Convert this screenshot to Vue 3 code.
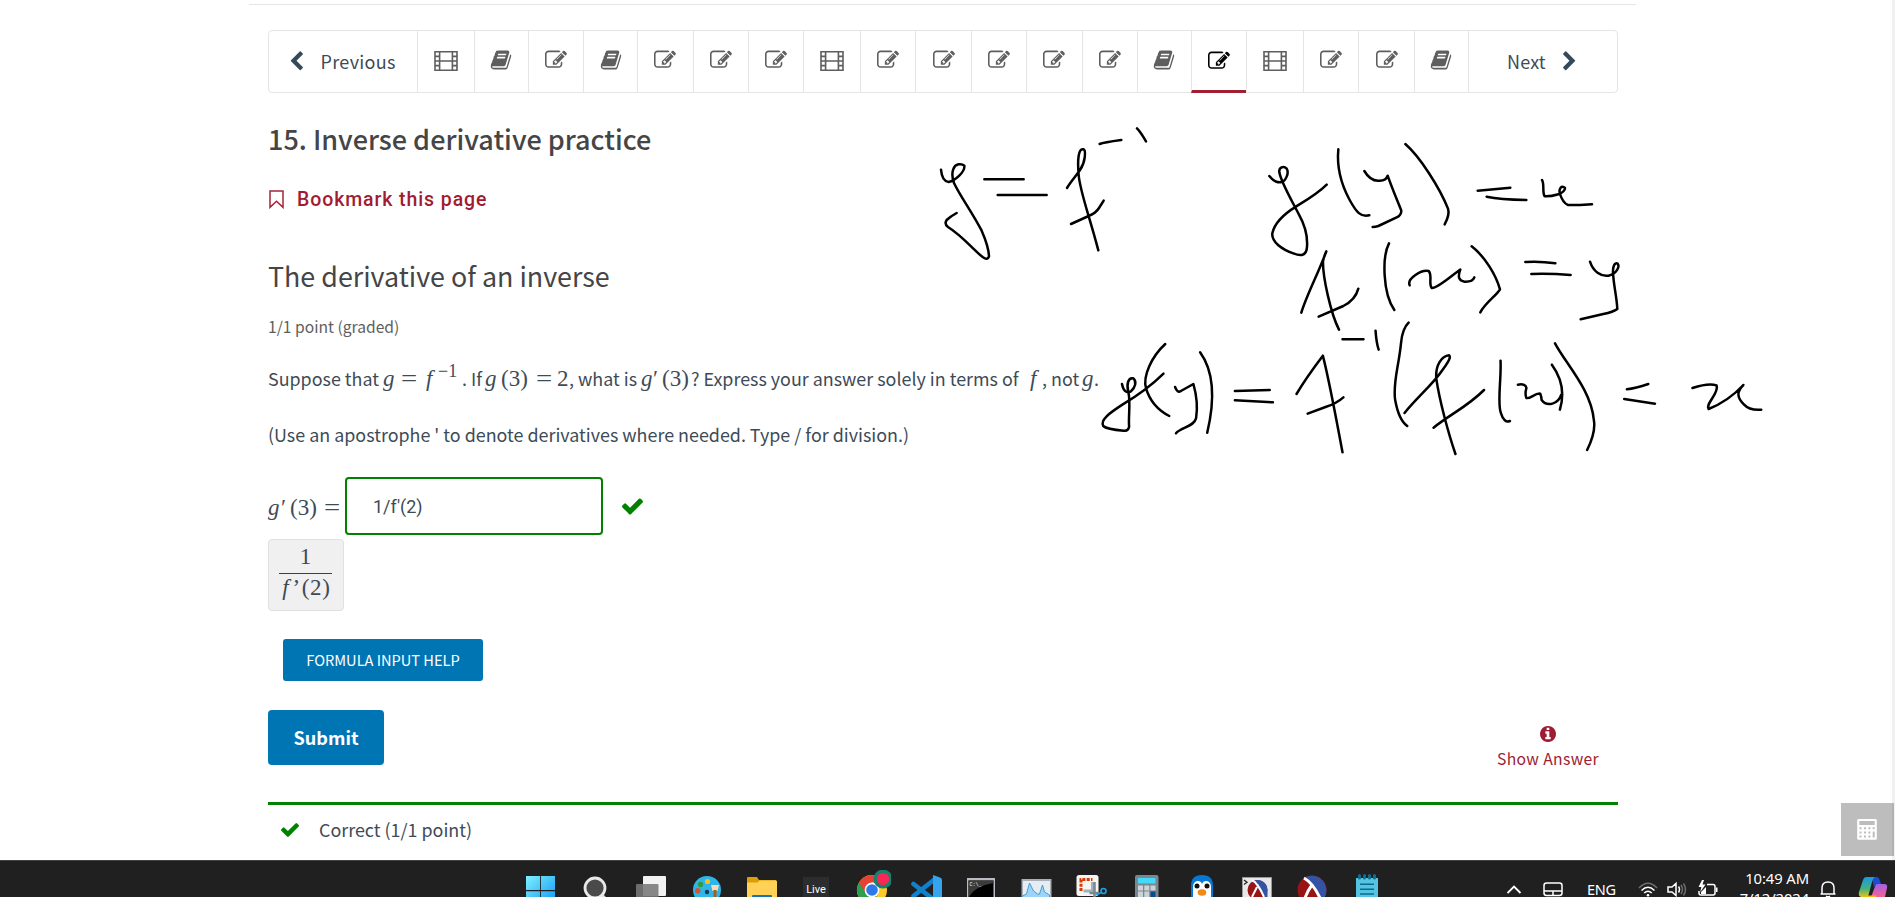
<script setup>
const icons = {
  edit: 'M888 1184l116-116-152-152-116 116v56h96v96h56zm440-720q-16-16-33 1l-350 350q-17 17-1 33t33-1l350-350q17-17 1-33zm80 594v190q0 119-84.5 203.5t-203.5 84.5h-832q-119 0-203.5-84.5t-84.5-203.5v-832q0-119 84.5-203.5t203.5-84.5h832q63 0 117 25 15 7 18 23 3 17-9 29l-49 49q-14 14-32 8-23-6-45-6h-832q-66 0-113 47t-47 113v832q0 66 47 113t113 47h832q66 0 113-47t47-113v-126q0-13 9-22l64-64q15-15 35-7t20 29zm-96-738l288 288-672 672h-288v-288zm444 132l-92 92-288-288 92-92q28-28 68-28t68 28l152 152q28 28 28 68t-28 68z',
  book: 'M1703 478q40 57 18 129l-275 906q-19 64-76.5 107.5t-122.5 43.5h-923q-77 0-148.5-53.5t-99.5-131.5q-24-67-2-127 0-4 3-27t4-37q1-8-3-21.5t-3-19.5q2-11 8-21t16.5-23.5 16.5-23.5q23-38 45-91.5t30-91.5q3-10 .5-30t-.5-28q3-11 17-28t17-23q21-36 42-92t25-90q1-9-2.5-32t.5-28q4-13 22-30.5t22-22.5q19-26 42.5-84.5t27.5-96.5q1-8-3-25.5t-2-26.5q2-8 9-18t18-23 17-21q8-12 16.5-30.5t15-35 16-36 19.5-32 26.5-23.5 36-11.5 47.5 5.5l-1 3q38-9 51-9h761q74 0 114 56t18 130l-274 906q-36 119-71.5 153.5t-128.5 34.5h-869q-27 0-38 15-11 16-1 43 24 70 144 70h923q29 0 56-15.5t35-41.5l300-987q7-22 5-57 38 15 59 43zm-1064 2q-4 13 2 22.5t20 9.5h608q13 0 25.5-9.5t16.5-22.5l21-64q4-13-2-22.5t-20-9.5h-608q-13 0-25.5 9.5t-16.5 22.5zm-83 256q-4 13 2 22.5t20 9.5h608q13 0 25.5-9.5t16.5-22.5l21-64q4-13-2-22.5t-20-9.5h-608q-13 0-25.5 9.5t-16.5 22.5z',
  check: 'M1671 566q0 40-28 68l-724 724-136 136q-28 28-68 28t-68-28l-136-136-362-362q-28-28-28-68t28-68l136-136q28-28 68-28t68 28l294 295 656-657q28-28 68-28t68 28l136 136q28 28 28 68z',
  left: 'M1427 301l-531 531 531 531q19 19 19 45t-19 45l-166 166q-19 19-45 19t-45-19l-742-742q-19-19-19-45t19-45l742-742q19-19 45-19t45 19l166 166q19 19 19 45t-19 45z',
  right: 'M1363 877l-742 742q-19 19-45 19t-45-19l-166-166q-19-19-19-45t19-45l531-531-531-531q-19-19-19-45t19-45l166-166q19-19 45-19t45 19l742 742q19 19 19 45t-19 45z',
  info: 'M1152 1376v-160q0-14-9-23t-23-9h-96v-512q0-14-9-23t-23-9h-320q-14 0-23 9t-9 23v160q0 14 9 23t23 9h96v320h-96q-14 0-23 9t-9 23v160q0 14 9 23t23 9h448q14 0 23-9t9-23zm-128-896v-160q0-14-9-23t-23-9h-192q-14 0-23 9t-9 23v160q0 14 9 23t23 9h192q14 0 23-9t9-23zm640 416q0 209-103 385.5t-279.5 279.5-385.5 103-385.5-103-279.5-279.5-103-385.5 103-385.5 279.5-279.5 385.5-103 385.5 103 279.5 279.5 103 385.5z',
}
const tabs = ['film', 'book', 'edit', 'book', 'edit', 'edit', 'edit', 'film', 'edit', 'edit', 'edit', 'edit', 'edit', 'book', 'edit', 'film', 'edit', 'edit', 'book']
const current = 14

// [text, kind, width of the slot in px]
const question = [
  ['Suppose that', 't sup', 115], ['g', 'm i', 18], ['=', 'm eq', 25], ['f', 'm i', 12], ['−1', 'm pow', 24],
  ['. If', 't', 23], ['g', 'm i', 16], ['(3)', 'm', 35], ['=', 'm eq', 21], ['2', 'm', 12],
  [', what is', 't what', 72], ['g', 'm i', 12], ['′', 'm pr', 9], ['(3)', 'm', 29],
  ['? Express your answer solely in terms of', 't expr', 339], ['f', 'm i', 12], [', not', 't', 40], ['g', 'm i', 12], ['.', 't', 6],
]
</script>

<template>
  <div class="page">
    <div class="content">
      <div class="topline"></div>
      <nav class="seq">
        <div class="side prev">
          <svg class="chev" viewBox="0 0 1792 1792"><path :d="icons.left" /></svg>
          <span class="prevtxt">Previous</span>
        </div>
        <div v-for="(t, i) in tabs" :key="i" class="tab" :class="[t, { active: i === current }]">
          <svg v-if="t === 'film'" class="filmico" viewBox="0 0 24 20">
            <path d="M1 .8h22v18.4H1zM5.6 1v18M18.4 1v18M5.6 10h12.8M1 5.4h4.6M1 10h4.6M1 14.6h4.6M18.4 5.4H23M18.4 10H23M18.4 14.6H23" />
          </svg>
          <svg v-else class="ico" viewBox="0 0 1792 1792"><path :d="icons[t]" /></svg>
        </div>
        <div class="side next">
          <span class="nexttxt">Next</span>
          <svg class="chev" viewBox="0 0 1792 1792"><path :d="icons.right" /></svg>
        </div>
      </nav>

      <h1>15. Inverse derivative practice</h1>
      <div class="bookmark">
        <svg viewBox="0 0 15 19"><path d="M1 1h13v16.4l-6.5-6.2L1 17.4z" /></svg>
        <span>Bookmark this page</span>
      </div>
      <h2>The derivative of an inverse</h2>
      <div class="graded">1/1 point (graded)</div>
      <div class="question">
        <span v-for="(q, i) in question" :key="i" :class="q[1]" :style="{ width: q[2] + 'px' }">{{ q[0] }}</span>
      </div>
      <div class="hint">(Use an apostrophe ' to denote derivatives where needed. Type / for division.)</div>

      <div class="answer">
        <div class="lhs">
          <span class="m i ag">g</span><span class="m ap">′</span><span class="m a3">(3)</span><span class="m eq">=</span>
        </div>
        <div class="field">1/f'(2)</div>
        <svg class="ok" viewBox="121 334 1550 1188"><path :d="icons.check" /></svg>
      </div>
      <div class="preview">
        <span class="m num">1</span>
        <span class="m den"><i>f</i><span class="apos">’</span>(2)</span>
      </div>
      <button class="help">FORMULA INPUT HELP</button>
      <div class="actions">
        <button class="submit">Submit</button>
        <div class="show">
          <svg viewBox="128 128 1536 1536"><path :d="icons.info" /></svg>
          <span>Show Answer</span>
        </div>
      </div>
      <div class="result">
        <svg viewBox="121 334 1550 1188"><path :d="icons.check" /></svg>
        <span>Correct (1/1 point)</span>
      </div>
    </div>

    <svg class="ink" viewBox="0 0 1895 897">
      <g transform="translate(900 110) scale(.33333)">
        <path d="M123 179Q126 214 146 216C165 212 196 185 193 167C185 160 166 160 160 177C155 190 157 205 162 219C180 258 215 304 245 362Q266 410 267 439Q263 452 249 442C220 420 190 380 144 351Q132 342 140 330Q150 320 170 309" />
        <path d="M253 208H371M293 255H440M599 102Q610 97 664 90M711 55Q722 66 738 94" />
        <path d="M501 234C512 215 528 198 540 180C557 155 558 120 550 118C535 114 532 150 536 195C540 245 566 310 595 421M513 342L566 318Q588 309 597 294L611 272" />
      </g>
      <g transform="translate(1250 120) scale(.33333)">
        <path d="M58 168Q74 188 92 187C108 184 118 158 110 146C101 136 86 142 88 157C94 190 130 250 147 284C170 325 173 352 171 380C170 410 150 408 130 400C95 388 64 365 67 340C74 305 105 280 139 259C170 240 202 222 230 194" />
        <path d="M265 88C260 140 272 190 299 240C320 278 332 292 358 286M343 153Q360 182 384 182Q408 184 413 167C428 210 444 246 454 272Q454 286 440 292L385 318Q376 321 368 321M466 72C510 110 570 205 594 266Q600 284 584 313" />
        <path d="M683 212L781 203M710 230Q750 238 829 240M876 180C884 192 876 218 884 229C905 230 945 222 945 204C935 194 925 206 930 222Q938 248 954 255H990L1026 253" />
        <path d="M154 578C170 525 205 460 229 394Q222 408 219 424C218 470 242 580 267 629M206 590L280 558Q316 540 325 506M417 370C396 410 398 520 433 570M479 496C470 475 515 448 536 453C548 465 535 492 545 504C560 508 608 464 631 449Q618 482 644 485Q668 486 673 472M665 379C705 410 738 465 750 508C740 526 706 548 691 577M826 426Q870 423 916 430M844 462Q900 460 962 465M1020 425C1030 455 1052 470 1075 467C1100 462 1110 440 1103 431C1094 426 1086 440 1090 470C1092 500 1100 530 1102 567Q1090 576 1060 582L992 598" />
      </g>
      <g transform="translate(1080 310) scale(.44643 .33333)">
        <path d="M94 222C97 242 104 252 114 244C124 232 128 214 119 205C108 202 104 222 108 245C114 275 108 320 110 350Q108 364 98 362C80 360 58 356 52 348C45 330 65 310 95 284C130 256 165 220 187 191M191 102C160 140 140 200 148 235Q160 290 200 318M213 231Q218 250 226 243L254 222C260 250 264 290 260 325C256 350 226 352 215 370M269 127C295 175 305 255 285 368" />
        <path d="M347 243L425 240M347 271L432 277M588 88H635M662 62Q664 100 669 119M485 252Q505 206 544 137Q558 210 588 427M510 311L550 291Q575 280 590 262M736 38Q722 56 719 100C714 170 700 220 706 270Q714 330 733 348" />
        <path d="M727 309C755 262 790 224 812 180C830 148 830 140 827 136C810 138 796 165 798 205C805 270 825 370 841 432M792 353C830 312 868 290 905 240M942 152C944 210 934 280 943 310Q950 340 963 333M981 224Q998 220 1000 234Q996 252 1000 264C1008 268 1020 248 1031 251Q1034 262 1034 270C1046 292 1072 282 1078 254M1057 164C1074 195 1088 240 1075 299M1064 100C1090 165 1145 240 1151 330Q1156 365 1136 420" />
        <path d="M1225 238Q1244 235 1273 222M1219 267L1288 281M1372 234C1390 226 1412 220 1426 226C1432 250 1400 282 1408 297C1440 280 1470 248 1486 225C1470 245 1472 264 1487 283Q1500 302 1526 299" />
      </g>
    </svg>

    <div class="scroll"></div>
    <div class="calc">
      <svg viewBox="0 0 20 21">
        <path fill-rule="evenodd" fill="#fff" d="M1.500 0h17q1.300 0 1.300 1.300v18.200q0 1.300-1.300 1.300h-17Q.2 20.800.2 19.500V1.300Q.2 0 1.500 0zM2.300 2h15.400v4H2.300z" />
        <path fill="#bdbdbd" d="M2.500 8.200h2v2h-2zM7 8.200h2v2H7zM11.400 8.200h2v2h-2zM15.700 8.200h2v2h-2zM2.500 12.400h2v2h-2zM7 12.400h2v2H7zM11.400 12.400h2v2h-2zM15.700 12.400h2v6.200h-2zM2.500 16.600h2v2h-2zM7 16.600h2v2H7zM11.400 16.600h2v2h-2z" />
      </svg>
    </div>

    <div class="taskbar">
      <div class="apps">
        <svg viewBox="1 0 40 27">
          <defs><linearGradient id="win" x1="0" y1="0" x2="1" y2="1"><stop offset="0" stop-color="#7ff0ff" /><stop offset="1" stop-color="#0a96f5" /></linearGradient></defs>
          <path fill="url(#win)" d="M6 6h14v14H6zM20.900 6H35v14H20.900zM6 21.300h14V35H6zM20.900 21.300H35V35H20.900z" />
        </svg>
        <svg viewBox="1 0 40 27"><path d="M26 25l6 6" stroke="#ddd" stroke-width="4" /><circle cx="20" cy="18" r="10" fill="#4a4a4a" stroke="#e9e9e9" stroke-width="2.800" /></svg>
        <svg viewBox="0 0 40 27"><rect x="12" y="6" width="23" height="20" rx="1" fill="#f2f2f2" /><rect x="5" y="14" width="22.500" height="16" rx="1" fill="#777" opacity=".88" /></svg>
        <svg viewBox="-1 0 40 27">
          <circle cx="20" cy="20" r="14" fill="#30b5e8" /><circle cx="13.500" cy="14.500" r="2.700" fill="#2f9e38" /><circle cx="20.500" cy="11.500" r="2.600" fill="#f9c11c" /><circle cx="10.800" cy="20.800" r="2.700" fill="#d4552b" /><circle cx="20" cy="22" r="2.200" fill="#173d52" />
          <path fill="#f5dcb8" d="M24 15h8l-1.500 6h-5z" /><path fill="#a5601f" d="M26.500 20h3v8h-3z" />
        </svg>
        <svg viewBox="-1 0 40 27"><path fill="#dc9d05" d="M5 8q0-1 1-1h9l2 3h17v8H5z" /><path fill="#ffd257" d="M5 12.500h10.500l2-2H34q1 0 1 1V27H5z" /><path fill="#1674bd" d="M10 27v-1q0-1 1-1h18q1 0 1 1v1z" /></svg>
        <div class="live">Live</div>
        <svg viewBox="-1 0 40 27">
          <circle cx="20" cy="20" r="15" fill="#fbc928" /><path fill="#2d9f4c" d="M7 12.500A15 15 0 0 0 20 35l6-11z" /><path fill="#e34234" d="M7 12.500a15 15 0 0 1 26 0H20l-6 11z" />
          <circle cx="20" cy="20" r="7.400" fill="#fff" /><circle cx="20" cy="20" r="5.800" fill="#2f78ea" />
          <circle cx="31" cy="9" r="9.500" fill="#14826e" /><circle cx="31" cy="9" r="6.200" fill="#f72855" />
        </svg>
        <svg viewBox="-1 0 40 27"><path d="M6.500 14l22 17M6.500 26L28 9" stroke="#1181cd" stroke-width="4.600" stroke-linecap="round" /><path fill="#35a4ee" d="M26 5l7 2.500q2 .8 2 2.500v20h-9z" /></svg>
        <svg viewBox="0 0 40 27"><path fill="#b9bcc4" d="M6 8h28v19H6z" /><path fill="#000" d="M7.500 10.500h25V27h-25z" /><path fill="#3b3b3b" d="M7.500 10.500h25V13Q14 16 8 27h-.5z" /><text x="8.500" y="15.500" class="cmd">C:\_</text></svg>
        <svg viewBox="-.5 0 40 27"><path fill="#a9b0bb" d="M5 9h30v18H5z" /><path fill="#e5edf3" d="M6.500 11h27v16h-27z" /><path fill="#9bd4f8" stroke="#4a9bd3" d="M6 26l4-2 3-11 4 8 4 3 2 0 3-9 2 7 5 3v3H6z" /></svg>
        <svg viewBox="-.5 0 40 27"><rect x="5" y="5" width="22" height="21" rx="2.500" fill="#f5f5f5" /><path d="M9.500 21V9.500H21" fill="none" stroke="#d83b01" stroke-width="3" stroke-dasharray="3 1.300" /><path d="M21 12v9h-9" fill="none" stroke="#a5b0ba" stroke-width="3" /><path d="M23 12v15M18 23h9" stroke="#7a8791" stroke-width="2.500" /><circle cx="32" cy="21" r="2.500" fill="none" stroke="#1e9de0" stroke-width="1.700" /><path d="M29.500 22.500L25 25" stroke="#1e9de0" stroke-width="2" /></svg>
        <svg viewBox="0 0 40 27"><rect x="8" y="5" width="23.500" height="26" rx="2" fill="#7c868e" /><path fill="#43d9f8" d="M11 8h17.500v5.500H11z" /><path fill="#cbd3d9" d="M11 15.500h5v5h-5zM17.300 15.500h5v5h-5zM23.500 15.500h5v5h-5zM11 21.500h5V27h-5zM17.300 21.500h5V27h-5z" /><path fill="#0c4a8e" d="M23.500 21.500h5V27h-5z" /></svg>
        <svg viewBox="0 0 40 27"><path fill="#0878d4" d="M9 27V16Q9 5 20 5t11 11v11z" /><path fill="#fff" d="M11 27V16q1-5 5-5 3 0 4 3 1-3 4-3 4 0 5 5v11z" /><circle cx="15" cy="16" r="2.500" fill="#111" /><circle cx="25" cy="16" r="2.500" fill="#111" /><ellipse cx="20" cy="22.500" rx="4.300" ry="3.200" fill="#f08a18" /></svg>
        <svg viewBox="0 0 40 27"><path fill="#e8e8ea" stroke="#9a9a9a" d="M5.500 7.500h29V28h-29z" /><circle cx="20.500" cy="20" r="10" fill="#991414" /><path fill="#3553a4" d="M16 11a10 10 0 0 1 14.500 9v7H27z" /><path d="M15 10q6 3 12 17M20 17l-5 10" fill="none" stroke="#fff" stroke-width="2" /><path d="M7 10l3 2.300L7 14.500" fill="none" stroke="#222" stroke-width="1.300" /></svg>
        <svg viewBox="0 0 40 27"><circle cx="20" cy="20" r="14.500" fill="#991414" /><path fill="#3553a4" d="M14 7a14.500 14.500 0 0 1 18.500 20.500H28Q23 14 14 7z" /><path d="M12 8q9 5 16 20M20 15q-4 5-7 13" fill="none" stroke="#fff" stroke-width="3" /></svg>
        <svg viewBox="0 0 40 27"><path fill="#55c4e2" d="M9 8h22v19H9z" /><path d="M13 14.200h14M13 19.200h14M13 24h14" stroke="#0b6b8a" stroke-width="1.500" /><path d="M12.500 5.500V8M17.500 5.500V8M22.500 5.500V8M27.500 5.500V8" stroke="#0f6e8f" stroke-width="3" stroke-linecap="round" /></svg>
      </div>
      <div class="tray">
        <svg class="caret" viewBox="0 0 16 27"><path d="M1.500 23L8 16.500l6.500 6.500" /></svg>
        <svg class="pad" viewBox="0 0 20 27"><rect x="1" y="13" width="18" height="12.500" rx="2.500" /><path d="M1 21h18M10 21v4.500" /></svg>
        <span class="eng">ENG</span>
        <svg class="wifi" viewBox="0 0 20 27"><path d="M1 18Q10 8.500 19 18" opacity=".35" /><path d="M3.500 20.500q6.500-6.500 13 0M6.200 23q3.800-3.600 7.600 0" /><circle cx="10" cy="25.200" r="1.300" fill="#fff" stroke="none" /></svg>
        <svg class="vol" viewBox="0 0 20 27"><path d="M1 17h4l4-3.500v12L5 22H1zM11.500 16.500q2 3 0 6" /><path d="M14 15q3 4.500 0 9M16.500 13.500q4 6 0 12" opacity=".35" /></svg>
        <svg class="bat" viewBox="0 0 22 27"><path d="M10 14.500h6q2 0 2 2V23q0 2-2 2H4q-2 0-2-2v-2" /><path fill="#fff" stroke="none" d="M19 17.500h1.500v4.500H19zM5 10L1.500 17h2.800l-1 5 5.200-7.500H5.500L7 10zM4 24V22l5-5v7z" /></svg>
        <div class="clock"><span>10:49 AM</span><span class="date">7/12/2024</span></div>
        <svg class="bell" viewBox="0 0 18 27"><path d="M1.500 24h15M3 24v-6q0-6 6-6t6 6v6M7 26q2 1.500 4 0" /></svg>
        <svg class="copilot" viewBox="0 0 30 27">
          <defs><linearGradient id="cpa" x1="0" y1="0" x2="0" y2="1"><stop offset="0" stop-color="#1899e8" /><stop offset=".6" stop-color="#48b27a" /><stop offset="1" stop-color="#e6c31b" /></linearGradient><linearGradient id="cpb" x1="0" y1="0" x2="0" y2="1"><stop offset="0" stop-color="#a260e8" /><stop offset="1" stop-color="#f8628d" /></linearGradient></defs>
          <path fill="url(#cpb)" d="M18 14h8q4 0 3 4l-2 9H13z" /><path fill="#1d4bd1" d="M14 7h5q2 0 3 4l1 3h-3q-3 0-4 4z" /><path fill="url(#cpa)" d="M8 7h9q-2 1-3 5l-4 15H3Q0 26 1 22L5 10q1-3 3-3z" /><path fill="#f3b614" d="M7 25.500h11V27H7z" />
        </svg>
      </div>
    </div>
  </div>
</template>

<style>
body { margin: 0; overflow: hidden; }
</style>

<style scoped>
.page { position: relative; width: 1895px; height: 897px; background: #fff; overflow: hidden; display: flex; flex-direction: column; font-family: "Noto Sans CJK SC", "Noto Sans", sans-serif; color: #3d4b57; }
.page * { box-sizing: border-box; }
.content { height: 860px; padding: 4px 277px 0 268px; white-space: nowrap; }
.topline { height: 1px; background: #e5e5e5; margin: 0 -18px 25px -19px; }
.seq { display: flex; height: 63px; border: 1px solid #e5e5e5; border-radius: 4px; width: 1350px; }
.side { display: flex; align-items: center; }
.prev { width: 148px; padding-left: 17px; flex: none; }
.next { flex: 1; padding-left: 38px; border-left: 1px solid #e5e5e5; }
.chev { width: 21px; height: 21px; fill: #34495a; }
.prevtxt, .nexttxt { font-size: 18px; line-height: 26px; margin-bottom: 2px; }
.prevtxt { margin-left: 13.500px; letter-spacing: .3px; }
.nexttxt { margin-right: 13.500px; letter-spacing: .2px; }
.tab { flex: none; width: 55.400px; border-left: 1px solid #e5e5e5; display: flex; justify-content: center; padding-top: 18px; margin-bottom: -1px; }
.tab.film { width: 56.500px; padding-top: 17px; }
.tab.book { width: 54.200px; }
.tab.active { border-bottom: 3px solid #a01f33; padding-top: 19px; }
.ico { width: 22px; height: 22px; fill: #5e5e5e; }
.active .ico { fill: #000; }
.filmico { width: 24px; height: 20px; margin-top: 3px; fill: none; stroke: #5e5e5e; stroke-width: 1.600; }
h1 { margin: 26px 0 0; font-size: 27px; line-height: 40px; height: 40px; font-weight: 500; color: #454545; }
.bookmark { margin-top: 26px; height: 30px; display: flex; color: #9f1c32; font: 500 19.500px/30px Roboto, sans-serif; letter-spacing: .9px; }
.bookmark svg { width: 15px; height: 19px; margin: 5px 13px 0 1px; fill: none; stroke: #a3263b; stroke-width: 1.500; }
h2 { margin: 41px 0 0; font-size: 26.850px; line-height: 40px; height: 40px; font-weight: 400; color: #454545; }
.graded { margin-top: 19px; font-size: 15.650px; line-height: 24px; height: 24px; color: #5e5e5e; }
.question { margin-top: 24px; height: 30px; display: flex; align-items: baseline; font-size: 17.900px; line-height: 30px; }
.question span { flex: none; }
.m { font-family: "Liberation Serif", serif; font-size: 23px; line-height: 30px; }
.i, .den i { font-style: italic; }
.eq { transform: scaleX(1.250); transform-origin: 0 50%; }
.pow { font-size: 18px; position: relative; top: -9px; }
.hint { margin-top: 26px; height: 30px; font-size: 17.900px; line-height: 30px; }
.answer { margin-top: 28px; height: 58px; display: flex; align-items: center; }
.lhs { width: 77px; display: flex; padding-top: 3px; }
.ag { width: 13px; } .ap { width: 9px; } .a3 { width: 34px; }
.field { width: 258px; height: 58px; border: 2px solid #008100; border-radius: 4px; padding-left: 26px; font: 400 18px/56px Roboto, sans-serif; }
.ok { width: 21px; height: 17px; margin: 1px 0 0 19px; fill: #008100; }
.preview { margin-top: 4px; width: 76px; height: 72px; background: #f0f0f0; border: 1px solid #e0e0e0; border-radius: 4px; display: flex; flex-direction: column; align-items: center; padding-right: 1px; }
.num { height: 34px; line-height: 33px; width: 53px; text-align: center; border-bottom: 1px solid #34444f; }
.den { line-height: 28px; white-space: nowrap; letter-spacing: .7px; padding-left: 2px; }
.den i { margin-right: 3px; }
.apos { margin-right: 1px; }
button { border: 0; color: #fff; background: #0075b4; display: block; font-family: inherit; padding: 0; }
.help { margin: 28px 0 0 15px; width: 200px; height: 42px; border-radius: 3px; font-size: 14.600px; line-height: 42px; }
.actions { margin-top: 29px; height: 55px; display: flex; justify-content: space-between; }
.submit { width: 116px; height: 55px; border-radius: 4px; font-size: 18.100px; font-weight: 700; padding-bottom: 2px; }
.show { margin: 16px 19px 0 0; display: flex; flex-direction: column; align-items: center; color: #9f1c32; font-size: 15.700px; line-height: 24px; letter-spacing: .35px; }
.show svg { width: 16px; height: 16px; flex: none; margin-bottom: 5px; fill: #9f1c32; }
.result { margin-top: 37px; border-top: 3px solid #008100; padding: 9px 0 0 13px; display: flex; font-size: 17.900px; line-height: 30px; }
.result svg { width: 18px; height: 14px; margin: 9px 20px 0 0; fill: #008100; }
.ink { position: absolute; left: 0; top: 0; width: 1895px; height: 897px; fill: none; }
.ink path { stroke: #000; stroke-width: 2.500; stroke-linecap: round; stroke-linejoin: round; vector-effect: non-scaling-stroke; }
.calc { position: absolute; left: 1841px; top: 803px; width: 53px; height: 53px; background: rgba(0, 0, 0, .26); display: flex; align-items: center; justify-content: center; padding-right: 2px; }
.calc svg { width: 20px; height: 21px; }
.scroll { position: absolute; right: 0; top: 0; width: 3px; height: 860px; background: #f1f1f1; }
.taskbar { height: 37px; background: #202020; border-top: 1px solid #424242; display: flex; padding-left: 513px; color: #fff; }
.apps { display: grid; grid-template-columns: repeat(16, 55.100px); justify-items: center; align-items: end; width: 994px; flex: none; overflow: hidden; }
.apps svg { width: 40px; height: 27px; }
.live { width: 26px; height: 20px; background: #2b2d2e; font: 11px/26px Roboto, sans-serif; text-align: center; }
.cmd { font: 5px "Liberation Mono", monospace; fill: #fff; }
.tray { display: flex; align-items: flex-end; overflow: hidden; font-family: "Noto Sans", sans-serif; }
.tray svg { height: 27px; flex: none; fill: none; stroke: #fff; stroke-width: 1.500; }
.tray .caret { width: 16px; stroke-width: 1.900; margin-left: -1px; }
.pad { width: 20px; margin-left: 21px; }
.eng { width: 30px; margin-left: 24px; font-size: 14.500px; line-height: 16px; margin-bottom: 0; letter-spacing: -.3px; }
.wifi { width: 20px; margin-left: 21px; }
.vol { width: 20px; margin-left: 9px; }
.bat { width: 22px; margin-left: 10px; }
.clock { width: 71px; margin-left: 19px; height: 28px; display: flex; flex-direction: column; align-items: flex-end; font-size: 14.800px; line-height: 19.500px; letter-spacing: -.1px; }
.bell { width: 18px; margin-left: 10px; }
.copilot { width: 30px; margin-left: 21px; }
.tray .copilot { stroke: none; }
</style>
